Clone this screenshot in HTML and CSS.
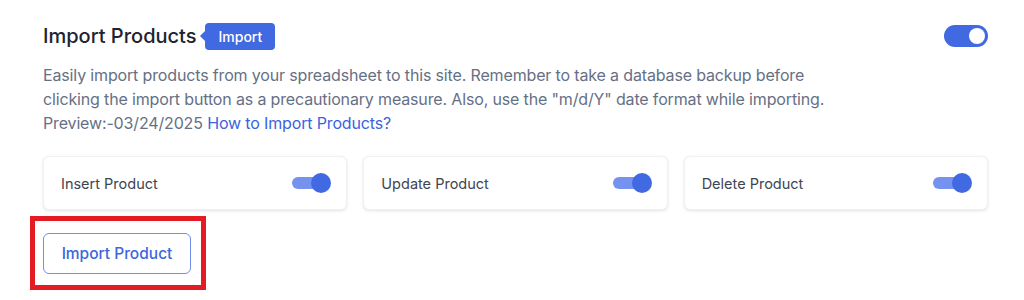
FILE: index.html
```html
<!DOCTYPE html>
<html lang="en">

<head>
    <meta charset="UTF-8">
    <meta name="viewport" content="width=device-width, initial-scale=1.0">
    <title>Import Products</title>
    <link rel="stylesheet" href="styles.css">
</head>

<body>
    <div class="panel">
        <div class="panel-head">
            <h2 class="title">Import Products</h2>
            <span class="badge">Import</span>
            <label class="switch switch-lg">
                <input type="checkbox" checked>
                <span class="knob"></span>
            </label>
        </div>

        <p class="desc">
            Easily import products from your spreadsheet to this site. Remember to take a database backup before
            clicking the import button as a precautionary measure. Also, use the "m/d/Y" date format while importing.
            Preview:-03/24/2025 <a href="#" class="link">How to Import Products?</a>
        </p>

        <div class="options">
            <div class="option">
                <span>Insert Product</span>
                <span class="toggle"></span>
            </div>
            <div class="option">
                <span>Update Product</span>
                <span class="toggle"></span>
            </div>
            <div class="option">
                <span>Delete Product</span>
                <span class="toggle"></span>
            </div>
        </div>

        <!-- red highlight box around the button -->
        <div class="highlight">
            <button class="btn">Import Product</button>
        </div>
    </div>
</body>

</html>
```

FILE: styles.css
```css
body {
    margin: 0;
    font-family: Inter, "Noto Sans", sans-serif;
    background: #fff;
    color: #1e2433;
}

.panel {
    width: 945px;
    padding: 22px 0 0 43px;
}

.panel-head {
    display: flex;
    align-items: center;
    height: 28px;
}

.title {
    margin: 0;
    font-size: 20px;
    font-weight: 500;
    color: #1d2330;
}

.badge {
    position: relative;
    margin-left: 9px;
    background: #4169e1;
    color: #fff;
    font-size: 14px;
    font-weight: 500;
    line-height: 27px;
    padding: 0 13px;
    border-radius: 4px;
}

.badge::before {
    content: "";
    position: absolute;
    left: -5px;
    top: 8px;
    border-top: 5px solid transparent;
    border-bottom: 5px solid transparent;
    border-right: 5px solid #4169e1;
}

.switch {
    margin-left: auto;
    position: relative;
    display: inline-block;
}

.switch input {
    display: none;
}

.switch-lg {
    width: 44px;
    height: 22px;
    border-radius: 11px;
    background: #4169e1;
}

.switch-lg .knob {
    position: absolute;
    right: 3px;
    top: 3px;
    width: 16px;
    height: 16px;
    border-radius: 50%;
    background: #fff;
}

.desc {
    margin: 13px 0 0;
    max-width: 800px;
    font-size: 16px;
    line-height: 24px;
    letter-spacing: -0.15px;
    color: #667085;
}

.link {
    color: #3b63dd;
    text-decoration: none;
}

.options {
    display: grid;
    grid-template-columns: repeat(3, 1fr);
    gap: 16px;
    margin-top: 21px;
}

.option {
    display: flex;
    align-items: center;
    justify-content: space-between;
    height: 54px;
    padding: 0 16px 0 17px;
    background: #fff;
    border: 1px solid #f0f1f4;
    border-radius: 6px;
    box-shadow: 0 1px 3px rgba(16, 24, 40, 0.12);
    font-size: 14.5px;
    color: #3d4452;
    box-sizing: border-box;
}

.toggle {
    position: relative;
    width: 38px;
    height: 12px;
    border-radius: 6px;
    background: #7592ee;
}

.toggle::after {
    content: "";
    position: absolute;
    right: -1px;
    top: -4px;
    width: 20px;
    height: 20px;
    border-radius: 50%;
    background: #4169e1;
}

.highlight {
    display: inline-block;
    margin: 6px 0 0 -13px;
    padding: 12px 10px 11px 8px;
    border: 5px solid #e41b23;
}

.btn {
    display: block;
    width: 148px;
    height: 41px;
    background: #fff;
    border: 1px solid #6f8ef0;
    border-radius: 6px;
    color: #3e66dd;
    font-family: inherit;
    font-size: 15.5px;
    font-weight: 500;
}
```
